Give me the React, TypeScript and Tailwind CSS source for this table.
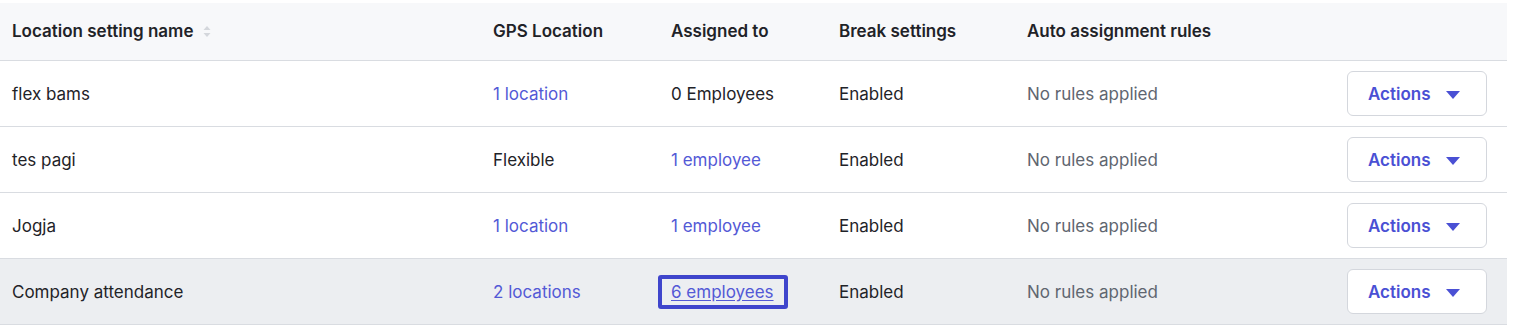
const rows = [
  { name: 'flex bams', gps: '1 location', gpsLink: true, assigned: '0 Employees', assignedLink: false },
  { name: 'tes pagi', gps: 'Flexible', gpsLink: false, assigned: '1 employee', assignedLink: true },
  { name: 'Jogja', gps: '1 location', gpsLink: true, assigned: '1 employee', assignedLink: true },
  { name: 'Company attendance', gps: '2 locations', gpsLink: true, assigned: '6 employees', assignedLink: true, focused: true },
];

function SortIcon() {
  return (
    <svg width="8" height="13" viewBox="0 0 8 13" className="ml-[10px] inline-block">
      <path d="M4 1 L7.5 5 H0.5 Z" fill="#d4d7dc" />
      <path d="M4 12 L7.5 8 H0.5 Z" fill="#d4d7dc" />
    </svg>
  );
}

export default function App() {
  return (
    <div className="bg-white pt-[3px] pr-2 font-['Inter',sans-serif] text-[17px] text-[#1f2328]">
      <table className="w-[1507px] table-fixed border-collapse">
        <thead>
          <tr className="h-[57px] border-b border-[#d9dce1] bg-[#f7f8fa] text-left font-semibold">
            <th className="w-[481px] pl-3 font-semibold">Location setting name<SortIcon /></th>
            <th className="w-[178px] pl-3 font-semibold">GPS Location</th>
            <th className="w-[168px] pl-3 font-semibold">Assigned to</th>
            <th className="w-[188px] pl-3 font-semibold">Break settings</th>
            <th className="pl-3 font-semibold">Auto assignment rules</th>
            <th className="w-[180px]"></th>
          </tr>
        </thead>
        <tbody>
          {rows.map((r) => (
            <tr key={r.name} className={`h-[66px] border-b border-[#d9dce1] ${r.focused ? 'bg-[#eceef1]' : 'bg-white'}`}>
              <td className="pl-3 pt-1">{r.name}</td>
              <td className={`pl-3 pt-1 ${r.gpsLink ? 'text-[#5359d6]' : ''}`}>{r.gps}</td>
              <td className="pl-3 pt-1">
                {r.assignedLink ? (
                  <span className={`relative text-[#5359d6] ${r.focused ? 'underline underline-offset-2' : ''}`}>
                    {r.assigned}
                    {r.focused && (
                      <span className="absolute -top-[7px] -bottom-[7px] -left-[13px] -right-[14px] rounded-[3px] border-4 border-[#3f45cc]" />
                    )}
                  </span>
                ) : (
                  r.assigned
                )}
              </td>
              <td className="pl-3 pt-1">Enabled</td>
              <td className="pl-3 pt-1 text-[#5f6670]">No rules applied</td>
              <td className="pr-5 text-right">
                <button className="inline-flex h-[45px] w-[140px] items-center justify-between rounded-md border border-[#d4d7dd] bg-white pt-1 pl-5 pr-[26px] font-semibold text-[#4a50d4]">
                  Actions
                  <svg width="14" height="8" viewBox="0 0 14 8">
                    <path d="M0 0 H14 L7 8 Z" fill="#4a50d4" />
                  </svg>
                </button>
              </td>
            </tr>
          ))}
        </tbody>
      </table>
    </div>
  );
}
